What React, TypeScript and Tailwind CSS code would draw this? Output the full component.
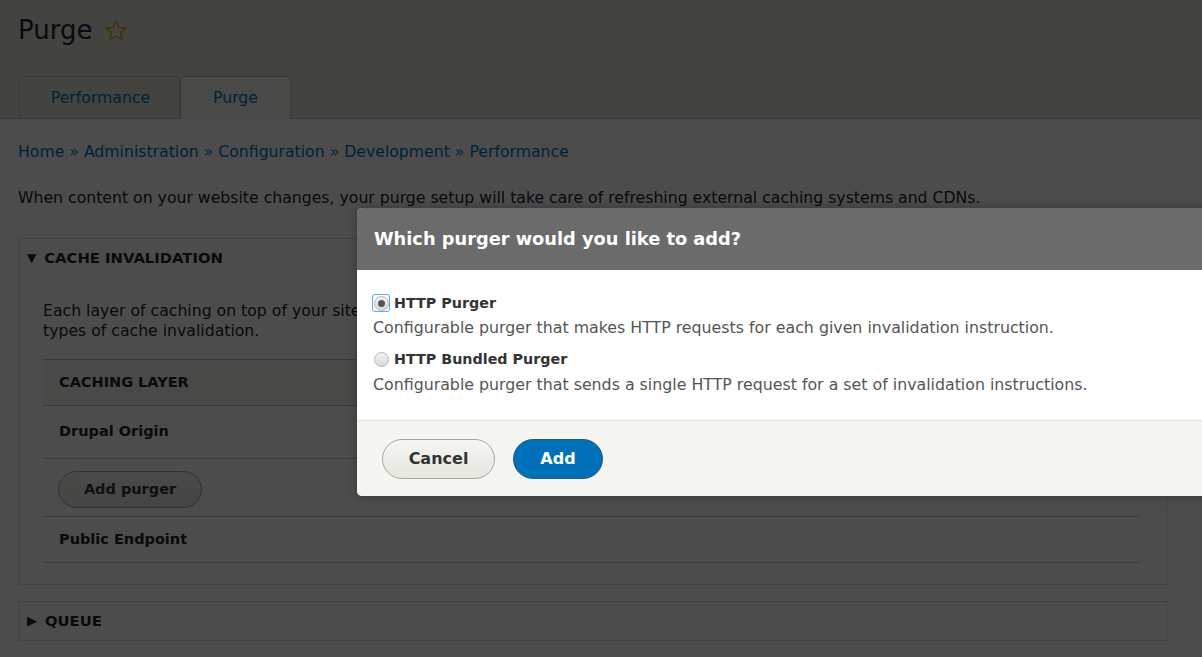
import React from 'react'

const font = { fontFamily: '"DejaVu Sans", "Liberation Sans", sans-serif' }

function Star() {
  return (
    <svg width="24" height="24" viewBox="0 0 24 24" className="ml-[12px] mt-[1px]">
      <path
        d="M12 2.2l2.9 6.3 6.9.7-5.2 4.6 1.5 6.8L12 17.1l-6.1 3.5 1.5-6.8-5.2-4.6 6.9-.7z"
        fill="none"
        stroke="#e0a526"
        strokeWidth="1.4"
        strokeLinejoin="round"
      />
    </svg>
  )
}

function Radio({ checked }: { checked?: boolean }) {
  return (
    <span
      className={
        'flex h-[18px] w-[18px] shrink-0 items-center justify-center rounded-[3px] ' +
        (checked ? 'border border-[#5aa9f5]' : 'border border-transparent')
      }
    >
      <span className="flex h-[15px] w-[15px] items-center justify-center rounded-full border border-[#b8b8b8] bg-gradient-to-b from-[#f3f3f3] to-[#d9d9d9]">
        {checked && <span className="h-[7px] w-[7px] rounded-full bg-[#555]" />}
      </span>
    </span>
  )
}

export default function App() {
  return (
    <div className="relative h-[657px] w-full overflow-hidden bg-white text-[15.7px] text-[#222330]" style={font}>
      {/* en-tête */}
      <div className="border-b border-[#bfbfba] bg-[#e0e0d8] px-[18px] pt-[12px]">
        <div className="flex items-center">
          <h1 className="text-[26px] leading-[36px] font-normal">Purge</h1>
          <Star />
        </div>
        <div className="mt-[28px] -mb-px flex pl-px">
          <a className="flex h-[42px] w-[161px] items-center justify-center rounded-t-[5px] border border-b-0 border-[#bfbfba] bg-[#e0e0d8] pl-[2px] text-[#0074bd]">
            Performance
          </a>
          <a className="flex h-[43px] w-[111px] items-center justify-center rounded-t-[5px] border border-[#bfbfba] border-b-[#f5f5f2] bg-[#f5f5f2] text-[#0074bd]">
            Purge
          </a>
        </div>
      </div>

      {/* contenu */}
      <div className="pl-[18px] pr-[35px]">
        <div className="mt-[23px] leading-[20px] text-[#0074bd]">
          Home » Administration » Configuration » Development » Performance
        </div>
        <p className="mt-[26px] leading-[20px]">
          When content on your website changes, your purge setup will take care of refreshing external caching systems and CDNs.
        </p>

        <div className="mt-[30px] border border-dotted border-[#bbb]">
          <div className="flex items-center gap-[8px] pl-[8px] pt-[9px] leading-[20px]">
            <span className="text-[12px]">▼</span>
            <span className="text-[14.8px] font-bold uppercase">Cache invalidation</span>
          </div>
          <div className="pl-[24px] pr-[26px] pb-[21px]">
            <p className="mt-[33px] leading-[20px]">
              Each layer of caching on top of your site is cleared by a purger. Purgers support many
              <br />
              types of cache invalidation.
            </p>
            <div className="mt-[18px] border-t border-[#bfbfba] text-[14.5px] font-bold">
              <div className="flex h-[46px] items-center border-b border-[#bfbfba] bg-[#f5f5f2] pl-[16px] uppercase">
                Caching layer
              </div>
              <div className="flex h-[53px] items-center border-b border-[#ccc] pl-[16px]">Drupal Origin</div>
              <div className="flex h-[58px] items-center border-b border-[#ccc] pl-[15px]">
                <button className="mt-[4px] h-[37px] w-[144px] rounded-full border border-[#a6a6a6] bg-gradient-to-b from-[#f6f6f3] to-[#e7e7df] font-bold text-[#333]">
                  Add purger
                </button>
              </div>
              <div className="flex h-[46px] items-center border-b border-[#ccc] pl-[16px]">Public Endpoint</div>
            </div>
          </div>
        </div>

        <div className="mt-[16px] flex h-[40px] items-center gap-[8px] border border-dotted border-[#bbb] pl-[8px]">
          <span className="text-[13px]">▶</span>
          <span className="text-[14.8px] font-bold uppercase">Queue</span>
        </div>
      </div>

      {/* voile */}
      <div className="absolute inset-0 bg-[rgba(0,0,0,0.7)]" />

      {/* fenêtre de dialogue */}
      <div className="absolute left-[357px] top-[208px] w-[900px] overflow-hidden rounded-[5px] bg-white shadow-[0_0_10px_rgba(0,0,0,0.3)]">
        <div className="flex h-[62px] items-center bg-[#6b6b6b] pl-[17px]">
          <h2 className="text-[17.8px] font-bold text-white">Which purger would you like to add?</h2>
        </div>
        <div className="px-[15px] pt-[23px] pb-[25px] text-[15.8px] leading-[20px]">
          <div className="flex h-[20px] items-center gap-[4px]">
            <Radio checked />
            <span className="text-[14.3px] font-bold text-[#333]">HTTP Purger</span>
          </div>
          <div className="mt-[5px] pl-px text-[#555]">
            Configurable purger that makes HTTP requests for each given invalidation instruction.
          </div>
          <div className="mt-[11px] flex h-[20px] items-center gap-[4px]">
            <Radio />
            <span className="text-[14.3px] font-bold text-[#333]">HTTP Bundled Purger</span>
          </div>
          <div className="mt-[6px] pl-px text-[#555]">
            Configurable purger that sends a single HTTP request for a set of invalidation instructions.
          </div>
        </div>
        <div className="flex h-[76px] items-center gap-[18px] border-t border-[#e6e6e0] bg-[#f5f5f2] pl-[25px]">
          <button className="h-[40px] w-[113px] rounded-full border border-[#a6a6a6] bg-gradient-to-b from-[#f6f6f3] to-[#e7e7df] text-[16px] font-bold text-[#333]">
            Cancel
          </button>
          <button className="h-[40px] w-[90px] rounded-full border border-[#1e5c90] bg-[#0071b8] text-[16px] font-bold text-white">
            Add
          </button>
        </div>
      </div>
    </div>
  )
}
